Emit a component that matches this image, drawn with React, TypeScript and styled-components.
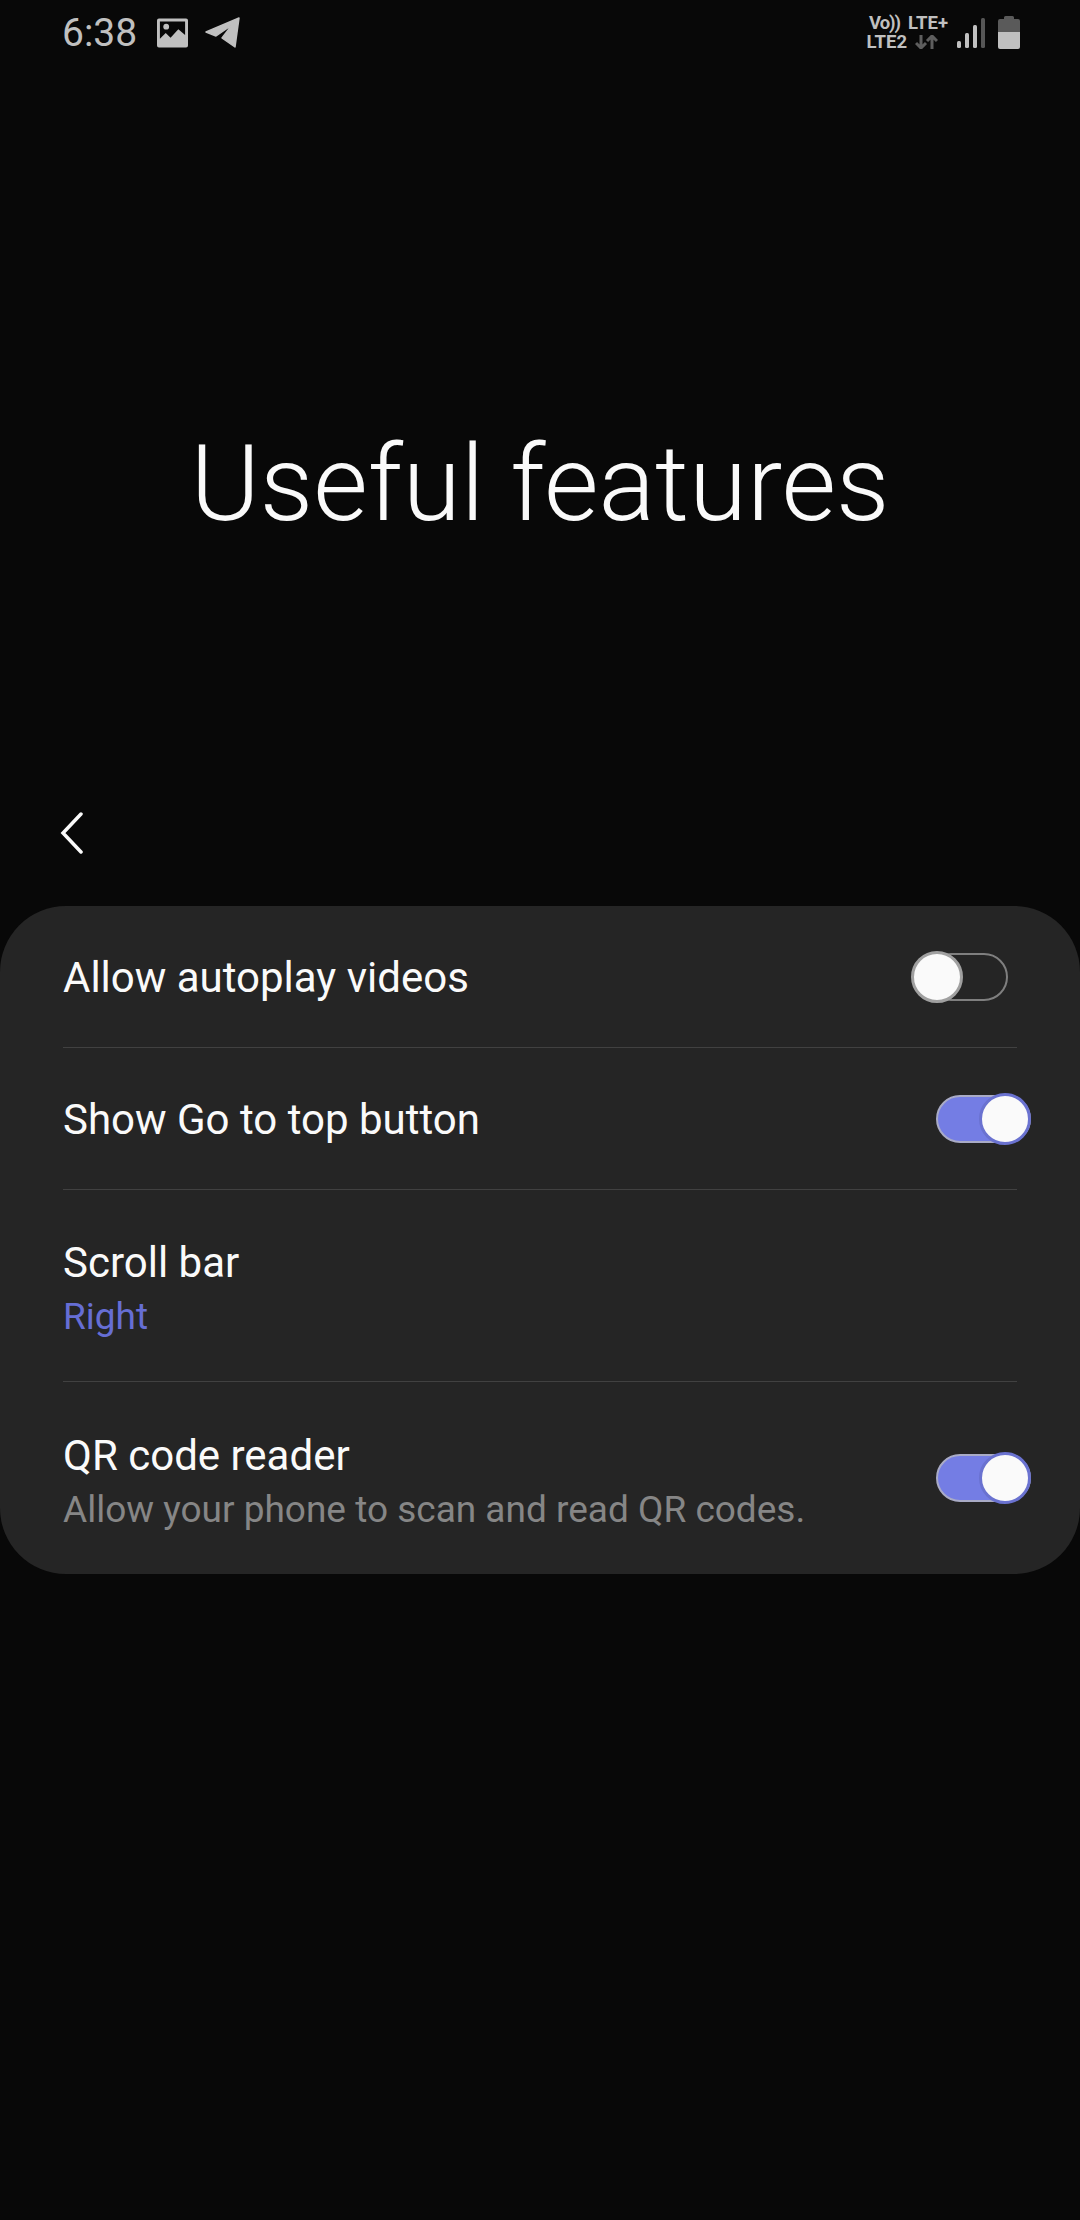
import { createGlobalStyle, styled } from 'styled-components';

const GlobalStyle = createGlobalStyle`
  html, body {
    margin: 0;
    padding: 0;
    background: #080808;
  }
  body {
    font-family: Roboto, "Liberation Sans", sans-serif;
  }
`;

const Page = styled.div`
  width: 1080px;
  height: 2220px;
  background: #080808;
  display: flex;
  flex-direction: column;
  overflow: hidden;
`;

const StatusBar = styled.div`
  height: 70px;
  padding: 0 60px 5px 62px;
  box-sizing: border-box;
  display: flex;
  align-items: center;
  justify-content: space-between;
  color: #c0c0c0;
`;

const StatusGroup = styled.div`
  display: flex;
  align-items: center;
`;

const Clock = styled.span`
  font-size: 39px;
  line-height: 46px;
  margin-right: 20px;
`;

const Hero = styled.div`
  height: 742px;
  padding-top: 86px;
  box-sizing: border-box;
  display: flex;
  align-items: center;
  justify-content: center;
`;

const Title = styled.h1`
  margin: 0;
  font-size: 105.5px;
  font-weight: 300;
  color: #fafafa;
`;

const BackRow = styled.div`
  height: 94px;
  padding-left: 60px;
  display: flex;
  align-items: flex-start;
`;

const Card = styled.div`
  background: #252525;
  border-radius: 66px;
  display: flex;
  flex-direction: column;
`;

const Row = styled.div<{ $height: number; $last?: boolean }>`
  height: ${(p) => p.$height}px;
  margin: 0 63px;
  padding-top: 3px;
  box-sizing: border-box;
  display: flex;
  align-items: center;
  justify-content: space-between;
  position: relative;
  border-bottom: ${(p) => (p.$last ? 'none' : '1px solid #414141')};
`;

const RowText = styled.div`
  padding-top: 6px;
  display: flex;
  flex-direction: column;
`;

const Label = styled.span`
  font-size: 42px;
  line-height: 54px;
  color: #fafafa;
`;

const Sub = styled.span<{ $accent?: boolean }>`
  font-size: 37px;
  line-height: 54px;
  color: ${(p) => (p.$accent ? '#666ed4' : '#868686')};
`;

const Track = styled.div<{ $on: boolean }>`
  position: absolute;
  top: 50%;
  right: ${(p) => (p.$on ? '-14px' : '9px')};
  transform: translateY(-50%);
  width: ${(p) => (p.$on ? '95px' : '81px')};
  height: 48px;
  box-sizing: border-box;
  border-radius: 24px;
  background: ${(p) => (p.$on ? '#747de4' : 'transparent')};
  border: 2px solid ${(p) => (p.$on ? '#a9abc6' : '#7f7f7f')};
`;

const Thumb = styled.div<{ $on: boolean }>`
  position: absolute;
  top: 50%;
  transform: translateY(-50%);
  ${(p) => (p.$on ? 'right: -2px;' : 'left: -18px;')}
  width: 52px;
  height: 52px;
  box-sizing: border-box;
  border-radius: 50%;
  background: #fafafa;
  border: 3px solid ${(p) => (p.$on ? '#6a72d0' : '#a0a0a0')};
`;

function Switch({ on }: { on: boolean }) {
  return (
    <Track $on={on}>
      <Thumb $on={on} />
    </Track>
  );
}

const TinyText = styled.div<{ $tight?: boolean }>`
  font-size: 18.5px;
  font-weight: 700;
  line-height: 19px;
  letter-spacing: ${(p) => (p.$tight ? '-1px' : '0')};
  color: #c0c0c0;
  white-space: nowrap;
`;

const NetBlock = styled.div`
  display: flex;
  flex-direction: column;
  align-items: flex-end;
  margin-right: 9px;
`;

const NetLine = styled.div<{ $inset?: boolean }>`
  display: flex;
  align-items: center;
  gap: 8px;
  padding-right: ${(p) => (p.$inset ? '10px' : '0')};
`;

const ImageSvg = styled.svg`
  margin-right: 17px;
`;

const SignalSvg = styled.svg`
  margin-right: 11px;
`;

function ImageIcon() {
  return (
    <ImageSvg width="31" height="30" viewBox="0 0 32 30">
      <path
        fillRule="evenodd"
        fill="#c0c0c0"
        d="M2 0h28a2 2 0 0 1 2 2v26a2 2 0 0 1-2 2H2a2 2 0 0 1-2-2V2a2 2 0 0 1 2-2zM3 3v18l6-6 5 5 8-9 7 6V3z"
      />
      <circle cx="9.500" cy="8.500" r="3" fill="#c0c0c0" />
    </ImageSvg>
  );
}

function SendIcon() {
  return (
    <svg width="36" height="31" viewBox="0 0 36 31">
      <path
        fill="#c0c0c0"
        stroke="#c0c0c0"
        strokeWidth="1.5"
        strokeLinejoin="round"
        d="M1 15 34 1 30 30 17 21 27 8 11 19z"
      />
    </svg>
  );
}

function Arrows() {
  return (
    <svg width="23" height="14" viewBox="0 0 23 14">
      <path d="M6 0v13M1 8l5 5 5-5" stroke="#5e5e5e" strokeWidth="3" fill="none" />
      <path d="M17 14V1M12 6l5-5 5 5" stroke="#5e5e5e" strokeWidth="3" fill="none" />
    </svg>
  );
}

function SignalIcon() {
  return (
    <SignalSvg width="30" height="30" viewBox="0 0 30 30">
      <rect x="0" y="23" width="4" height="7" rx="1.500" fill="#c0c0c0" />
      <rect x="8" y="15" width="4" height="15" rx="1.500" fill="#c0c0c0" />
      <rect x="16" y="7" width="4" height="23" rx="1.500" fill="#c0c0c0" />
      <rect x="24" y="0" width="4" height="30" rx="1.500" fill="#565656" />
    </SignalSvg>
  );
}

function BatteryIcon() {
  return (
    <svg width="22" height="33" viewBox="0 0 22 33">
      <path d="M6 3V1.500A1.500 1.500 0 0 1 7.500 0h7A1.500 1.500 0 0 1 16 1.500V3h4a2 2 0 0 1 2 2v11H0V5a2 2 0 0 1 2-2z" fill="#5a5a5a" />
      <path d="M0 16h22v15a2 2 0 0 1-2 2H2a2 2 0 0 1-2-2z" fill="#c0c0c0" />
    </svg>
  );
}

function BackIcon() {
  return (
    <svg width="24" height="42" viewBox="0 0 24 42">
      <path d="M21 2 3 21l18 19" fill="none" stroke="#fafafa" strokeWidth="3.5" strokeLinecap="round" strokeLinejoin="miter" />
    </svg>
  );
}

export default function App() {
  return (
    <Page>
      <GlobalStyle />
      <StatusBar>
        <StatusGroup>
          <Clock>6:38</Clock>
          <ImageIcon />
          <SendIcon />
        </StatusGroup>
        <StatusGroup>
          <NetBlock>
            <NetLine>
              <TinyText $tight>Vo))</TinyText>
              <TinyText>LTE+</TinyText>
            </NetLine>
            <NetLine $inset>
              <TinyText>LTE2</TinyText>
              <Arrows />
            </NetLine>
          </NetBlock>
          <SignalIcon />
          <BatteryIcon />
        </StatusGroup>
      </StatusBar>
      <Hero>
        <Title>Useful features</Title>
      </Hero>
      <BackRow>
        <BackIcon />
      </BackRow>
      <Card>
        <Row $height={142}>
          <Label>Allow autoplay videos</Label>
          <Switch on={false} />
        </Row>
        <Row $height={142}>
          <Label>Show Go to top button</Label>
          <Switch on />
        </Row>
        <Row $height={192}>
          <RowText>
            <Label>Scroll bar</Label>
            <Sub $accent>Right</Sub>
          </RowText>
        </Row>
        <Row $height={192} $last>
          <RowText>
            <Label>QR code reader</Label>
            <Sub>Allow your phone to scan and read QR codes.</Sub>
          </RowText>
          <Switch on />
        </Row>
      </Card>
    </Page>
  );
}
